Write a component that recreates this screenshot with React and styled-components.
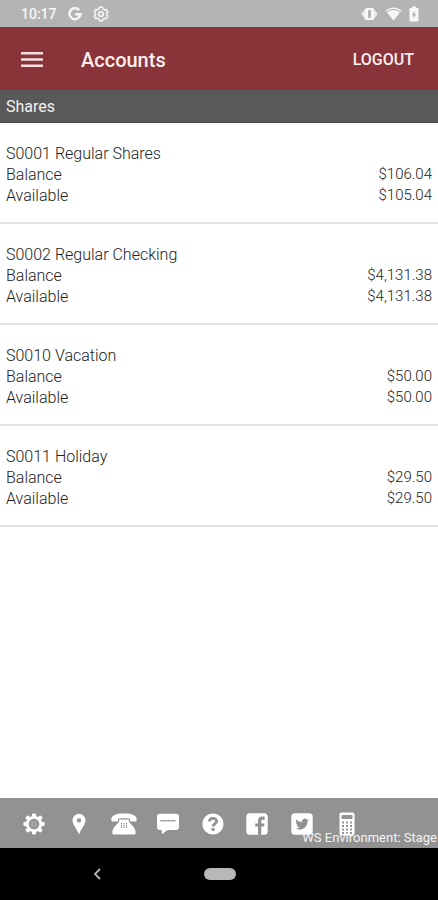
import styled, { createGlobalStyle } from "styled-components";

const accounts = [
  { name: "S0001 Regular Shares", balance: "$106.04", available: "$105.04" },
  { name: "S0002 Regular Checking", balance: "$4,131.38", available: "$4,131.38" },
  { name: "S0010 Vacation", balance: "$50.00", available: "$50.00" },
  { name: "S0011 Holiday", balance: "$29.50", available: "$29.50" },
];

function GearIcon() {
  const teeth = [0, 45, 90, 135, 180, 225, 270, 315];
  return (
    <svg width="22" height="22" viewBox="0 0 22 22">
      {teeth.map((angle) => (
        <path
          key={angle}
          d="M8.600 4.500 9.100 1.200Q9.200.4 10 .4h2q.8 0 .9.8L13.400 4.500z"
          fill="currentColor"
          transform={`rotate(${angle} 11 11)`}
        />
      ))}
      <circle cx="11" cy="11" r="8" fill="currentColor" />
      <circle cx="11" cy="11" r="4.500" fill="#a2a2a2" stroke="#8a8a8a" strokeWidth="1.500" />
    </svg>
  );
}

function PinIcon() {
  return (
    <svg width="14" height="22" viewBox="0 0 14 22">
      <path
        fill="currentColor"
        fillRule="evenodd"
        d="M7 .8a6.500 6.500 0 0 0-6.500 6.500C.5 11.500 5 16 7 21.500 9 16 13.500 11.500 13.500 7.300A6.500 6.500 0 0 0 7 .8zm0 4.400a2.200 2.200 0 1 1 0 4.400 2.200 2.200 0 0 1 0-4.400z"
      />
    </svg>
  );
}

function PhoneIcon() {
  return (
    <svg width="26" height="22" viewBox="0 0 26 22">
      <path
        fill="currentColor"
        d="M.3 6.800C.3 2.300 5 .6 13 .6s12.700 1.700 12.700 6.200c0 1.300-.4 1.700-1.200 1.700h-4.300c-.8 0-1.200-.4-1.200-1.200V5.800C17 5 9 5 7 5.800v1.500c0 .8-.4 1.200-1.200 1.200H1.500C.7 8.500.3 8.100.3 6.800z"
      />
      <path
        fill="currentColor"
        d="M8.200 6.600h9.600v1.800c1.500 2.600 6.900 5.900 6.900 11.300 0 1.200-.6 1.800-1.800 1.800H3.100c-1.200 0-1.800-.6-1.800-1.800 0-5.400 5.400-8.700 6.900-11.300z"
      />
      <path stroke="#929292" d="M10.500 10v5M13 10v5M15.500 10v5" strokeDasharray="1.400 .4" />
    </svg>
  );
}

function ChatIcon() {
  return (
    <svg width="24" height="22" viewBox="0 0 24 22">
      <path
        fill="currentColor"
        d="M4 .8h16q3 0 3 3V14q0 3-3 3h-8.500L6 21.200 5.600 17H4q-3 0-3-3V3.800q0-3 3-3z"
      />
      <path stroke="#929292" strokeWidth="1.600" strokeDasharray="1.800 .5" d="M4.500 7.800h15" />
    </svg>
  );
}

function HelpIcon() {
  return (
    <svg width="22" height="22" viewBox="0 0 22 22">
      <circle cx="11" cy="11" r="10.600" fill="currentColor" />
      <path
        fill="none"
        stroke="#929292"
        strokeWidth="2.800"
        d="M7.400 8.600C7.400 4.300 14.700 4.300 14.700 8.300c0 2.500-3.600 2.400-3.600 5.200"
      />
      <circle cx="11.100" cy="16.400" r="1.700" fill="#929292" />
    </svg>
  );
}

function FacebookIcon() {
  return (
    <svg width="22" height="22" viewBox="0 0 22 22">
      <rect x=".3" y=".3" width="21.400" height="21.400" rx="3.500" fill="currentColor" />
      <path
        fill="#929292"
        d="M12 21.700v-8.100H9.200v-3.200H12V8c0-2.900 1.800-4.400 4.300-4.400.9 0 1.900.1 2.400.2v2.900H17c-1.400 0-1.700.7-1.700 1.600v2.100h3.200l-.4 3.200h-2.800v8.100z"
      />
    </svg>
  );
}

function TwitterIcon() {
  return (
    <svg width="22" height="22" viewBox="0 0 22 22">
      <rect x=".3" y=".3" width="21.400" height="21.400" rx="3.500" fill="currentColor" />
      <g transform="translate(4.400 4.400) scale(.56)">
        <path
          fill="#929292"
          d="M23.950 4.570a10 10 0 0 1-2.820.78 4.960 4.960 0 0 0 2.160-2.720c-.95.550-2 .950-3.130 1.180a4.920 4.920 0 0 0-8.380 4.480C7.690 8.090 4.070 6.130 1.640 3.160a4.920 4.920 0 0 0 1.520 6.570 4.900 4.900 0 0 1-2.230-.61v.06a4.920 4.920 0 0 0 3.950 4.830 5 5 0 0 1-2.210.08 4.940 4.940 0 0 0 4.600 3.420A9.870 9.870 0 0 1 0 19.540a14 14 0 0 0 7.550 2.210c9.050 0 14-7.500 14-13.980 0-.21 0-.42-.02-.63a9.940 9.940 0 0 0 2.420-2.570z"
        />
      </g>
    </svg>
  );
}

function CalculatorIcon() {
  return (
    <svg width="16" height="24" viewBox="0 0 16 24">
      <rect x=".5" y=".5" width="15" height="23" rx="2" fill="currentColor" />
      <rect x="2.500" y="3" width="11" height="4" rx="1" fill="#929292" />
      <path
        stroke="#929292"
        strokeWidth="2"
        strokeDasharray="2 2"
        d="M3 10.500h10M3 14h10M3 17.500h10M3 21h10"
      />
    </svg>
  );
}

const shortcuts = [
  { label: "Settings", icon: <GearIcon /> },
  { label: "Locations", icon: <PinIcon /> },
  { label: "Call us", icon: <PhoneIcon /> },
  { label: "Messages", icon: <ChatIcon /> },
  { label: "Help", icon: <HelpIcon /> },
  { label: "Facebook", icon: <FacebookIcon /> },
  { label: "Twitter", icon: <TwitterIcon /> },
  { label: "Calculator", icon: <CalculatorIcon /> },
];

function StatusBar() {
  return (
    <Status>
      <StatusGroup>
        <time>10:17</time>
        <svg width="14" height="14" viewBox="0 0 14 14" fill="none" stroke="currentColor">
          <path strokeWidth="2.400" d="M11.300 3.200A5.500 5.500 0 1 0 12.500 7.200H7.200" />
        </svg>
        <svg width="16" height="16" viewBox="0 0 16 16" fill="none" stroke="currentColor">
          <path
            strokeWidth="1.500"
            strokeLinejoin="round"
            d="M6.500 1.200h3l.5 1.700 1.700.9 1.700-.4 1.400 2.600L13.500 7.200v1.600l1.300 1.200-1.400 2.600-1.700-.4-1.700.9-.5 1.700h-3L6 13.100l-1.700-.9-1.700.4L1.200 10l1.300-1.200V7.200L1.200 6l1.400-2.600 1.700.4L6 2.900z"
          />
          <circle cx="8" cy="8" r="2.300" strokeWidth="1.600" />
        </svg>
      </StatusGroup>
      <StatusGroup $tight>
        <svg width="17" height="14" viewBox="0 0 17 14">
          <path fill="currentColor" d="M4.500 1.500v11L.3 7zM12.500 1.500v11L16.700 7z" opacity=".8" />
          <rect x="4" y="1" width="9" height="12" rx="1.500" fill="currentColor" />
          <rect x="7" y="3" width="3" height="8" rx="1" fill="#b4b4b4" />
        </svg>
        <svg width="17" height="14" viewBox="0 0 17 14">
          <path fill="none" stroke="currentColor" strokeWidth="1.300" d="M.8 4.200Q8.500-2 16.200 4.200" />
          <path fill="currentColor" d="M2 5.300Q8.500.7 15 5.300L8.500 13.700z" />
        </svg>
        <svg width="10" height="16" viewBox="0 0 10 16">
          <path
            fill="currentColor"
            d="M3 .5h4V2h1.500q1 0 1 1v11.500q0 1-1 1h-7q-1 0-1-1V3q0-1 1-1H3z"
          />
          <path fill="#b4b4b4" d="M5.700 4.500 2.800 9.200h1.700v3.500L7.300 8H5.700z" />
        </svg>
      </StatusGroup>
    </Status>
  );
}

function App() {
  return (
    <Page>
      <GlobalStyle />
      <StatusBar />
      <Header>
        <MenuButton type="button" aria-label="Menu">
          <svg width="22" height="16" viewBox="0 0 22 16" stroke="currentColor" strokeWidth="2.500">
            <path d="M0 1.300h22M0 7.500h22M0 13.700h22" />
          </svg>
        </MenuButton>
        <h1>Accounts</h1>
        <LogoutButton type="button">LOGOUT</LogoutButton>
      </Header>
      <SectionTitle>Shares</SectionTitle>
      <AccountList>
        {accounts.map(({ name, balance, available }) => (
          <Account key={name}>
            <h3>{name}</h3>
            <dl>
              <Amount>
                <dt>Balance</dt>
                <dd>{balance}</dd>
              </Amount>
              <Amount>
                <dt>Available</dt>
                <dd>{available}</dd>
              </Amount>
            </dl>
          </Account>
        ))}
      </AccountList>
      <Toolbar>
        {shortcuts.map(({ label, icon }) => (
          <ToolButton key={label} type="button" aria-label={label}>
            {icon}
          </ToolButton>
        ))}
        <Environment>WS Environment: Stage</Environment>
      </Toolbar>
      <SystemNav>
        <SystemButton type="button" aria-label="Back">
          <svg width="8" height="12" viewBox="0 0 8 12" fill="none" stroke="#b5b5b5" strokeWidth="1.800">
            <path d="M7 1 2 6l5 5" />
          </svg>
        </SystemButton>
        <SystemButton type="button" aria-label="Home">
          <HomePill />
        </SystemButton>
      </SystemNav>
    </Page>
  );
}

const GlobalStyle = createGlobalStyle`
  * {
    box-sizing: border-box;
    margin: 0;
    padding: 0;
  }
  body {
    background-color: white;
    font-family: Roboto, "Liberation Sans", sans-serif;
  }
  button {
    border: none;
    background: none;
    font-family: inherit;
    cursor: pointer;
  }
  svg {
    display: block;
  }
`;

const Page = styled.div`
  min-height: 100vh;
  display: flex;
  flex-direction: column;
`;

const Status = styled.div`
  height: 27px;
  padding: 0 19px 0 21px;
  display: flex;
  align-items: center;
  justify-content: space-between;
  background-color: #b4b4b4;
  color: #f7f7f7;
  font-size: 14px;
  font-weight: 500;
`;

const StatusGroup = styled.div`
  display: flex;
  align-items: center;
  gap: ${({ $tight }) => ($tight ? "7px" : "11px")};
`;

const Header = styled.header`
  height: 63px;
  padding: 2px 24px 0 21px;
  display: flex;
  align-items: center;
  background-color: #883438;
  color: #fbeeee;
  h1 {
    flex: 1;
    margin-left: 38px;
    font-size: 20px;
    font-weight: 500;
  }
`;

const MenuButton = styled.button`
  color: #f6dede;
`;

const LogoutButton = styled.button`
  color: inherit;
  font-size: 16px;
  font-weight: 500;
`;

const SectionTitle = styled.h2`
  padding: 2px 6px 0;
  color: #f2f2f2;
  background-color: #595959;
  border-bottom: 1px solid #444;
  font-size: 16px;
  font-weight: 400;
  line-height: 30px;
`;

const AccountList = styled.main`
  flex: 1;
`;

const Account = styled.section`
  padding: 20px 6px 16px;
  border-bottom: 2px solid #e2e2e2;
  color: #222;
  font-size: 16px;
  line-height: 21px;
  h3 {
    font-size: 16px;
    font-weight: 300;
  }
`;

const Amount = styled.div`
  display: flex;
  justify-content: space-between;
  font-weight: 300;
  dd {
    font-size: 15px;
  }
`;

const Toolbar = styled.nav`
  position: relative;
  height: 50px;
  padding: 2px 69px 0 12px;
  display: flex;
  background-color: #929292;
  color: white;
`;

const ToolButton = styled.button`
  flex: 1;
  display: flex;
  align-items: center;
  justify-content: center;
  color: inherit;
`;

const Environment = styled.span`
  position: absolute;
  right: 1px;
  bottom: 2px;
  color: #f4f4f4;
  font-size: 13px;
  line-height: 16px;
`;

const SystemNav = styled.div`
  height: 52px;
  padding: 0 92px 0 93px;
  display: grid;
  grid-template-columns: 8px 1fr 8px;
  align-items: center;
  background-color: black;
`;

const SystemButton = styled.button`
  display: flex;
  justify-content: center;
`;

const HomePill = styled.span`
  width: 32px;
  height: 12px;
  border-radius: 6px;
  background-color: #b8b8b8;
`;

export default App;
